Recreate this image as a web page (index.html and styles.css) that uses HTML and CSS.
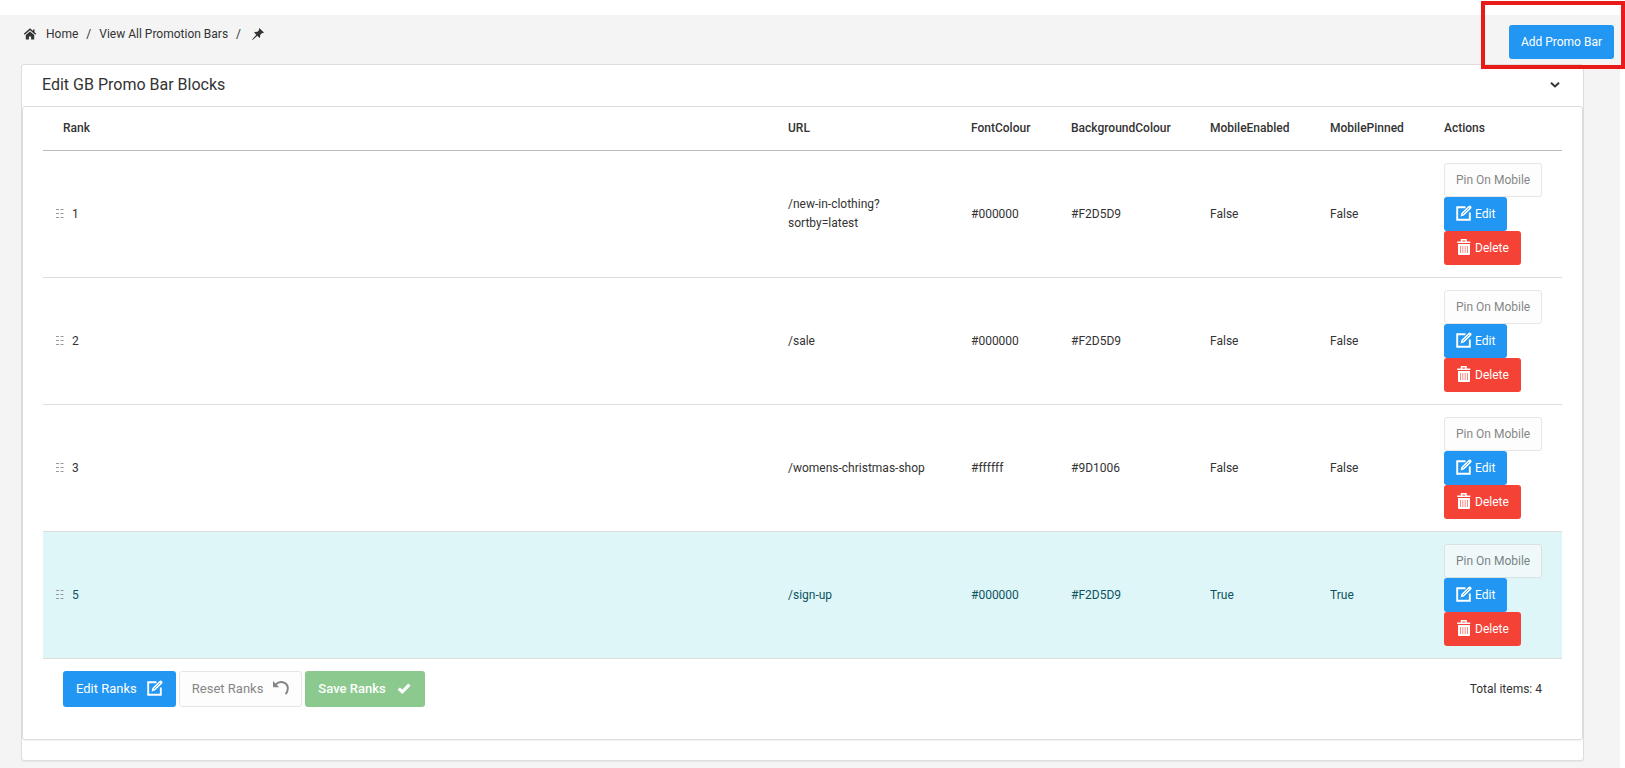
FILE: index.html
```
<!DOCTYPE html>
<html lang="en">
<head>
<meta charset="utf-8">
<title>Edit GB Promo Bar Blocks</title>
<link rel="stylesheet" href="styles.css">
</head>
<body>
<svg class="defs" aria-hidden="true">
  <symbol id="i-edit" viewBox="0 0 16 16"><path d="M9.5 2.2H1.2V14.8H13.8V7.6" fill="none" stroke="currentColor" stroke-width="1.9"/><path d="M4.6 11.4L5.4 8.1L12.6 .9Q13.7-.1 14.9 1.1Q16.1 2.3 15.1 3.4L7.9 10.6Z" fill="currentColor"/><path d="M6.7 9.2L13.2 2.8" stroke="#2196f3" stroke-width=".8"/></symbol>
  <symbol id="i-trash" viewBox="0 0 16 16"><path d="M2 5H14V15Q14 16 13 16H3Q2 16 2 15Z" fill="currentColor"/><path d="M1.2 3.2H14.300M5.5 3V.8H10V3" fill="none" stroke="currentColor" stroke-width="1.5"/><path d="M4.5 7V14M6.8 7V14M9.2 7V14M11.5 7V14" stroke="#f44336" stroke-opacity=".6" stroke-width="1"/></symbol>
  <symbol id="i-undo" viewBox="0 0 16 16"><path d="M2.4 4.6Q5.5 1.6 9 2Q14.8 3 14.8 8.4Q14.8 11.8 12.6 14.2" fill="none" stroke="currentColor" stroke-width="1.9"/><path d="M0 1V7.2H6.2Z" fill="currentColor"/></symbol>
  <symbol id="i-check" viewBox="0 0 16 16"><path d="M2.7 8.6L6.3 11.8L13.4 4.6" fill="none" stroke="currentColor" stroke-width="3.2"/></symbol>
  <symbol id="i-grip" viewBox="0 0 8 12"><path d="M0 1.500H3M4.500 1.500H7.500M0 5.500H3M4.500 5.500H7.500M0 9.500H3M4.500 9.500H7.500" stroke="currentColor" stroke-width="1"/></symbol>
</svg>

<main class="page">
  <header class="topbar">
    <nav class="crumbs" aria-label="Breadcrumb">
      <a href="#" class="home"><svg class="icon-sm" viewBox="0 0 12 12"><path d="M.3 6.3L6 1.300L11.700 6.300" fill="none" stroke="currentColor" stroke-width="1.500"/><path d="M9 1.500H10.500V4H9Z" fill="currentColor"/><path d="M1.800 7.100L6 3.500L10.200 7.100V11.500H7.100V8.500H4.900V11.500H1.800Z" fill="currentColor"/></svg>Home</a>
      <span>/</span>
      <a href="#">View All Promotion Bars</a>
      <span>/</span>
      <a href="#" class="pin" aria-label="Pin"><svg class="icon-sm" viewBox="0 0 12 12"><path d="M7.500 .2L11.900 4.500L10.900 5.200L10.100 4.900L8.100 6.900Q8.600 8.600 7.500 9.900L5.300 7.800L.6 11.900L.2 11.500L4.300 6.700L2.100 4.600Q3.500 3.400 5.200 3.900L7.200 2L6.800 1.100Z" fill="currentColor"/></svg></a>
    </nav>
    <div class="top-action"><button class="btn primary" type="button">Add Promo Bar</button></div>
  </header>

  <section class="panel">
    <div class="panel-head">
      <h1>Edit GB Promo Bar Blocks</h1>
      <button class="collapse" type="button" aria-label="Collapse"><svg viewBox="0 0 10 6"><path d="M1 .8L5 4.400L9 .8" fill="none" stroke="currentColor" stroke-width="2"/></svg></button>
    </div>
    <div class="panel-body">
      <table class="grid">
        <colgroup><col><col class="c-url"><col class="c-font"><col class="c-back"><col class="c-enabled"><col class="c-pinned"><col class="c-actions"></colgroup>
        <thead><tr><th>Rank</th><th>URL</th><th>FontColour</th><th>BackgroundColour</th><th>MobileEnabled</th><th>MobilePinned</th><th>Actions</th></tr></thead>
        <tbody>
          <tr><td class="rank"><svg class="grip"><use href="#i-grip"/></svg>1</td><td>/new-in-clothing?<wbr>sortby=latest</td><td>#000000</td><td>#F2D5D9</td><td>False</td><td>False</td>
            <td><div class="actions"><button class="btn plain" type="button" disabled>Pin On Mobile</button><button class="btn primary" type="button"><svg class="icon"><use href="#i-edit"/></svg>Edit</button><button class="btn danger" type="button"><svg class="icon"><use href="#i-trash"/></svg>Delete</button></div></td></tr>
          <tr><td class="rank"><svg class="grip"><use href="#i-grip"/></svg>2</td><td>/sale</td><td>#000000</td><td>#F2D5D9</td><td>False</td><td>False</td>
            <td><div class="actions"><button class="btn plain" type="button" disabled>Pin On Mobile</button><button class="btn primary" type="button"><svg class="icon"><use href="#i-edit"/></svg>Edit</button><button class="btn danger" type="button"><svg class="icon"><use href="#i-trash"/></svg>Delete</button></div></td></tr>
          <tr><td class="rank"><svg class="grip"><use href="#i-grip"/></svg>3</td><td>/womens-christmas-shop</td><td>#ffffff</td><td>#9D1006</td><td>False</td><td>False</td>
            <td><div class="actions"><button class="btn plain" type="button" disabled>Pin On Mobile</button><button class="btn primary" type="button"><svg class="icon"><use href="#i-edit"/></svg>Edit</button><button class="btn danger" type="button"><svg class="icon"><use href="#i-trash"/></svg>Delete</button></div></td></tr>
          <tr class="pinned"><td class="rank"><svg class="grip"><use href="#i-grip"/></svg>5</td><td>/sign-up</td><td>#000000</td><td>#F2D5D9</td><td>True</td><td>True</td>
            <td><div class="actions"><button class="btn plain" type="button" disabled>Pin On Mobile</button><button class="btn primary" type="button"><svg class="icon"><use href="#i-edit"/></svg>Edit</button><button class="btn danger" type="button"><svg class="icon"><use href="#i-trash"/></svg>Delete</button></div></td></tr>
        </tbody>
      </table>
      <div class="grid-foot">
        <div class="rank-tools">
          <button class="btn large primary" type="button">Edit Ranks<svg class="icon"><use href="#i-edit"/></svg></button>
          <button class="btn large plain" type="button" disabled>Reset Ranks<svg class="icon"><use href="#i-undo"/></svg></button>
          <button class="btn large success" type="button" disabled>Save Ranks<svg class="icon"><use href="#i-check"/></svg></button>
        </div>
        <span>Total items: 4</span>
      </div>
    </div>
  </section>
</main>
</body>
</html>
```
FILE: styles.css
```
* { box-sizing: border-box; }
body {
  margin: 0;
  padding: 15px 5px 0 0;
  min-height: 100vh;
  display: flex;
  flex-direction: column;
  background: #fff;
  color: #333;
  font: 12px/19px Roboto, sans-serif;
}
.defs { position: absolute; width: 0; height: 0; }
.page { flex: 1; background: #f4f4f4; padding-bottom: 7px; }
a { color: inherit; text-decoration: none; }

.topbar { display: flex; justify-content: space-between; height: 49px; }
.crumbs { display: flex; align-items: center; gap: 8px; height: 38px; padding-left: 24px; }
.crumbs a { display: flex; align-items: center; }
.crumbs .home { gap: 10px; }
.icon-sm { width: 12px; height: 12px; }
.pin { padding-left: 3px; }
.top-action { position: relative; padding: 10px 6px 0 0; }
.top-action::after {
  content: "";
  position: absolute;
  inset: -14px -5px -5px -28px;
  border: 4px solid #e81a1a;
  pointer-events: none;
}

.panel {
  margin: 0 36px 0 21px;
  padding-bottom: 20px;
  background: #fff;
  border: 1px solid #ddd;
  border-radius: 3px;
  box-shadow: 0 1px 1px rgba(0, 0, 0, .05);
}
.panel-head { display: flex; align-items: center; justify-content: space-between; height: 41px; padding: 0 23px 2px 20px; }
h1 { margin: 0; font-size: 16px; font-weight: 400; line-height: 26px; }
.collapse { display: flex; padding: 0; border: 0; background: none; color: #333; }
.collapse svg { width: 10px; height: 6px; }
.panel-body { padding: 0 20px 32px; border: 1px solid #ddd; border-radius: 3px; box-shadow: 0 1px 1px rgba(0, 0, 0, .05); }

.grid { width: 100%; border-collapse: separate; border-spacing: 0; table-layout: fixed; }
.c-url { width: 183px; }
.c-font { width: 100px; }
.c-back { width: 139px; }
.c-enabled { width: 120px; }
.c-pinned { width: 114px; }
.c-actions { width: 138px; }
th { height: 44px; padding: 12px 20px; text-align: left; font-weight: 500; border-bottom: 1px solid #bbb; }
td { padding: 12px 20px; border-bottom: 1px solid #ddd; }
.grid .rank { padding-left: 13px; }
.grip { width: 8px; height: 12px; margin-right: 8px; vertical-align: middle; color: #999; }
.pinned td { background: #dff6f9; color: #0c5460; }
.actions { display: flex; flex-direction: column; align-items: flex-start; }

.btn {
  display: inline-flex;
  align-items: center;
  gap: 3px;
  height: 34px;
  padding: 0 11px;
  border: 1px solid transparent;
  border-radius: 3px;
  color: #fff;
  font: 12px/19px Roboto, sans-serif;
  white-space: nowrap;
}
.icon { width: 16px; height: 16px; margin-bottom: 2px; }
.large { height: 36px; padding: 0 12px 1px; gap: 10px; font-size: 13px; }
.primary { background: #2196f3; }
.danger { background: #f44336; }
.plain { background: #fcfcfc; border-color: #d6d6d6; color: #333; opacity: .6; }
.success { background: #8bc98e; font-weight: 500; }

.grid-foot { display: flex; justify-content: space-between; align-items: center; padding: 12px 20px 0; }
.rank-tools { display: flex; gap: 3px; }
```
